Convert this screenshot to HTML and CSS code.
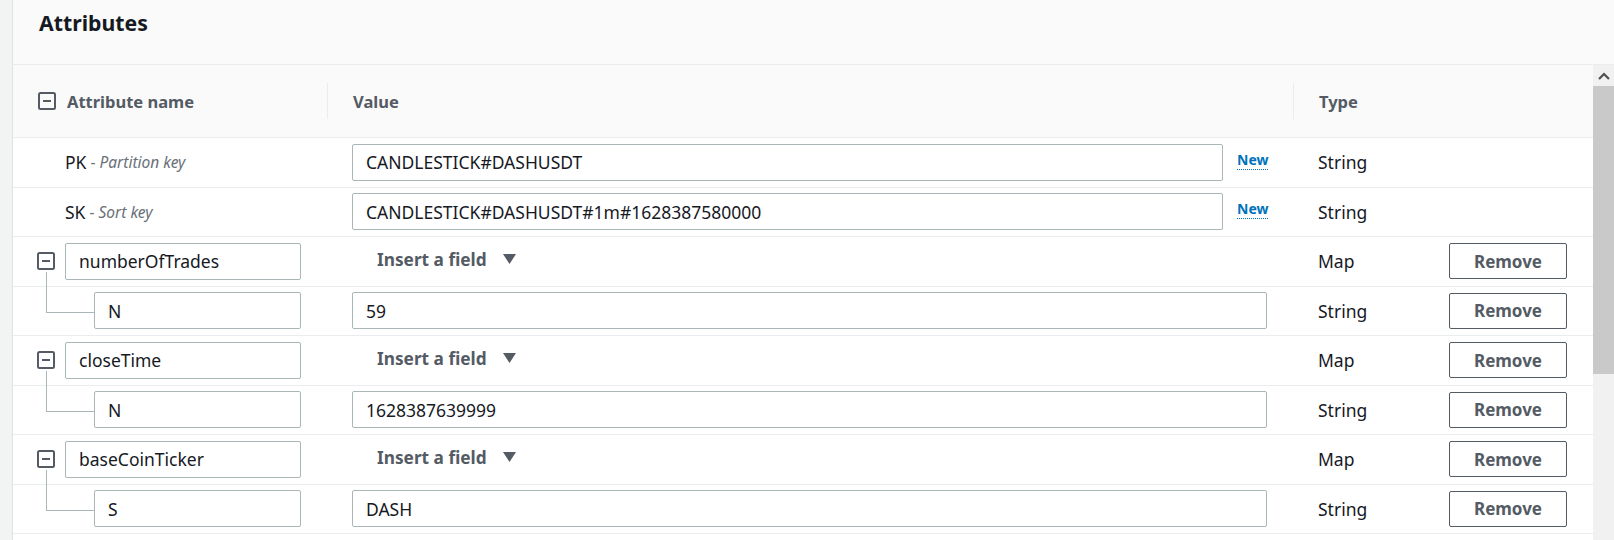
FILE: index.html
```html
<!DOCTYPE html>
<html lang="en">
<head>
<meta charset="utf-8">
<title>Attributes</title>
<link rel="stylesheet" href="styles.css">
</head>
<body>
<div class="page">
  <div class="strip"></div>
  <div class="panel">
    <div class="panel-header"><h2 class="title">Attributes</h2></div>
    <div class="scroll-area">
      <div class="table">
        <div class="row head-row">
          <div class="cell c1">
            <svg class="box-icon" width="18" height="18" viewBox="0 0 18 18"><rect x="1" y="1" width="16" height="16" rx="1.5" fill="none" stroke="#545b64" stroke-width="2"/><rect x="5" y="8" width="8" height="2" fill="#545b64"/></svg>
            <span class="th">Attribute name</span>
          </div>
          <div class="cell c2"><span class="divider"></span><span class="th">Value</span></div>
          <div class="cell c3"><span class="divider"></span><span class="th">Type</span></div>
        </div>

        <div class="row">
          <div class="cell c1 key-cell"><span class="key">PK</span><span class="key-note"> - <i>Partition key</i></span></div>
          <div class="cell c2 pad"><input class="field key-val" type="text" value="CANDLESTICK#DASHUSDT"><a class="new-link">New</a></div>
          <div class="cell c3 pad"><span class="type">String</span></div>
        </div>
        <div class="row">
          <div class="cell c1 key-cell"><span class="key">SK</span><span class="key-note"> - <i>Sort key</i></span></div>
          <div class="cell c2 pad"><input class="field key-val" type="text" value="CANDLESTICK#DASHUSDT#1m#1628387580000"><a class="new-link">New</a></div>
          <div class="cell c3 pad"><span class="type">String</span></div>
        </div>

        <div class="row">
          <div class="cell c1 parent-cell">
            <svg class="box-icon" width="18" height="18" viewBox="0 0 18 18"><rect x="1" y="1" width="16" height="16" rx="1.5" fill="none" stroke="#545b64" stroke-width="2"/><rect x="5" y="8" width="8" height="2" fill="#545b64"/></svg>
            <input class="field name-parent" type="text" value="numberOfTrades">
          </div>
          <div class="cell c2 insert-cell"><span class="insert">Insert a field</span><svg class="caret" width="13" height="10" viewBox="0 0 13 10"><polygon points="0,0 13,0 6.5,10" fill="#545b64"/></svg></div>
          <div class="cell c3 pad"><span class="type">Map</span><button class="remove">Remove</button></div>
        </div>
        <div class="row">
          <div class="cell c1 child-cell"><input class="field name-child" type="text" value="N"></div>
          <div class="cell c2 pad"><input class="field val" type="text" value="59"></div>
          <div class="cell c3 pad"><span class="type">String</span><button class="remove">Remove</button></div>
        </div>

        <div class="row">
          <div class="cell c1 parent-cell">
            <svg class="box-icon" width="18" height="18" viewBox="0 0 18 18"><rect x="1" y="1" width="16" height="16" rx="1.5" fill="none" stroke="#545b64" stroke-width="2"/><rect x="5" y="8" width="8" height="2" fill="#545b64"/></svg>
            <input class="field name-parent" type="text" value="closeTime">
          </div>
          <div class="cell c2 insert-cell"><span class="insert">Insert a field</span><svg class="caret" width="13" height="10" viewBox="0 0 13 10"><polygon points="0,0 13,0 6.5,10" fill="#545b64"/></svg></div>
          <div class="cell c3 pad"><span class="type">Map</span><button class="remove">Remove</button></div>
        </div>
        <div class="row">
          <div class="cell c1 child-cell"><input class="field name-child" type="text" value="N"></div>
          <div class="cell c2 pad"><input class="field val" type="text" value="1628387639999"></div>
          <div class="cell c3 pad"><span class="type">String</span><button class="remove">Remove</button></div>
        </div>

        <div class="row">
          <div class="cell c1 parent-cell">
            <svg class="box-icon" width="18" height="18" viewBox="0 0 18 18"><rect x="1" y="1" width="16" height="16" rx="1.5" fill="none" stroke="#545b64" stroke-width="2"/><rect x="5" y="8" width="8" height="2" fill="#545b64"/></svg>
            <input class="field name-parent" type="text" value="baseCoinTicker">
          </div>
          <div class="cell c2 insert-cell"><span class="insert">Insert a field</span><svg class="caret" width="13" height="10" viewBox="0 0 13 10"><polygon points="0,0 13,0 6.5,10" fill="#545b64"/></svg></div>
          <div class="cell c3 pad"><span class="type">Map</span><button class="remove">Remove</button></div>
        </div>
        <div class="row">
          <div class="cell c1 child-cell"><input class="field name-child" type="text" value="S"></div>
          <div class="cell c2 pad"><input class="field val" type="text" value="DASH"></div>
          <div class="cell c3 pad"><span class="type">String</span><button class="remove">Remove</button></div>
        </div>
        <div class="row empty-row"></div>
      </div>
      <div class="scrollbar">
        <div class="sb-up"><svg width="12" height="8" viewBox="0 0 12 8"><polyline points="1,7 6,2 11,7" fill="none" stroke="#505050" stroke-width="2.2"/></svg></div>
        <div class="sb-thumb"></div>
        <div class="sb-track"></div>
      </div>
    </div>
  </div>
</div>
</body>
</html>
```

FILE: styles.css
```css
* { box-sizing: border-box; }

html, body {
  margin: 0;
  padding: 0;
  background: #ffffff;
}

body {
  font-family: "Noto Sans", "Open Sans", sans-serif;
  font-size: 17.5px;
  color: #16191f;
}

.page {
  display: flex;
  height: 540px;
  overflow: hidden;
}

.strip {
  width: 13px;
  flex: 0 0 13px;
  background: #f2f3f3;
  border-right: 1px solid #dfe3e3;
}

.panel {
  flex: 1;
  display: flex;
  flex-direction: column;
  min-width: 0;
}

.panel-header {
  height: 65px;
  flex: 0 0 65px;
  background: #fafafa;
  border-bottom: 1px solid #eaeded;
  padding: 8px 0 0 26px;
}

.title {
  margin: 0;
  font-size: 21.25px;
  line-height: 30px;
  font-weight: 700;
  color: #16191f;
}

.scroll-area {
  flex: 1;
  display: flex;
  min-height: 0;
}

.table {
  flex: 1;
  display: flex;
  flex-direction: column;
}

.row {
  display: grid;
  grid-template-columns: 314px 966px 1fr;
  height: 49.5px;
  flex: 0 0 49.5px;
  border-bottom: 1px solid #eaeded;
  background: #ffffff;
}

.head-row {
  height: 73px;
  flex: 0 0 73px;
  background: #fafafa;
}

.empty-row {
  border-bottom: none;
}

.cell {
  display: flex;
  align-items: center;
  min-width: 0;
}

.th {
  font-size: 16.5px;
  font-weight: 700;
  color: #545b64;
}

.head-row .c1 {
  padding-left: 25px;
  gap: 11px;
}

.divider {
  width: 1px;
  height: 36px;
  background: #eaeded;
  margin-right: 25px;
}

.pad {
  padding-left: 25px;
}

.key-cell {
  padding-left: 52px;
}

.key-note {
  font-size: 15.5px;
  color: #687078;
  white-space: pre;
}

.key-note i {
  font-style: italic;
}

.field {
  height: 37px;
  border: 1px solid #aab7b8;
  border-radius: 2px;
  padding: 0 13px;
  font-family: "Noto Sans", "Open Sans", sans-serif;
  font-size: 17.5px;
  color: #16191f;
  background: #ffffff;
  outline: none;
}

.key-val {
  width: 871px;
}

.val {
  width: 915px;
}

.new-link {
  margin-left: 14px;
  font-size: 14px;
  font-weight: 700;
  color: #0073bb;
  border-bottom: 1px dotted #0073bb;
  line-height: 18px;
  margin-top: -4px;
}

.parent-cell {
  padding-left: 24px;
  gap: 10px;
}

.name-parent {
  width: 236px;
}

.child-cell {
  position: relative;
  padding-left: 81px;
}

.child-cell::before {
  content: "";
  position: absolute;
  left: 33px;
  top: -15px;
  width: 48px;
  height: 40px;
  border-left: 1px solid #aab7b8;
  border-bottom: 1px solid #aab7b8;
}

.name-child {
  width: 207px;
}

.insert-cell {
  padding-left: 50px;
  gap: 16px;
}

.insert {
  font-size: 17.25px;
  font-weight: 700;
  color: #545b64;
  margin-top: -3px;
}

.caret {
  margin-top: -4px;
}

.type {
  width: 131px;
  flex: 0 0 131px;
}

.remove {
  width: 118px;
  height: 36px;
  border: 1px solid #545b64;
  border-radius: 2px;
  background: #ffffff;
  font-family: "Noto Sans", "Open Sans", sans-serif;
  font-size: 17px;
  font-weight: 700;
  color: #545b64;
  padding: 0;
}

.scrollbar {
  width: 21px;
  flex: 0 0 21px;
  display: flex;
  flex-direction: column;
  background: #f1f1f1;
}

.sb-up {
  height: 21px;
  display: flex;
  align-items: center;
  justify-content: center;
}

.sb-thumb {
  height: 288px;
  background: #c9c9c9;
}

.sb-track {
  flex: 1;
}
```
